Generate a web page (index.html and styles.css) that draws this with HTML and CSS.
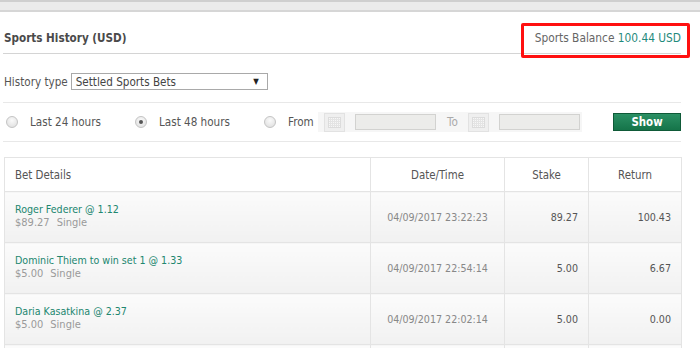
FILE: index.html
```html
<!DOCTYPE html>
<html>
<head>
<meta charset="utf-8">
<link rel="stylesheet" href="styles.css">
</head>
<body>
<div class="topbar"></div>
<div class="page">
  <div class="head">
    <div class="title">Sports History (USD)</div>
    <div class="balance">Sports Balance <span class="amount">100.44 USD</span></div>
    <div class="highlight"></div>
  </div>
  <div class="history">
    <span class="label">History type</span>
    <div class="select"><span>Settled Sports Bets</span><span class="arrow">▼</span></div>
  </div>
  <div class="filters">
    <span class="radio"></span><span class="rlabel">Last 24 hours</span>
    <span class="radio checked"></span><span class="rlabel">Last 48 hours</span>
    <span class="radio"></span><span class="rlabel from">From</span>
    <div class="range">
      <svg class="cal" width="21" height="19" viewBox="0 0 21 19">
        <rect x="0.5" y="0.5" width="20" height="18" fill="#efefef" stroke="#e2e2e2"/>
        <rect x="4.5" y="4.5" width="12" height="10" fill="#f7f7f7" stroke="#dcdcdc"/>
        <path d="M6.5 5v9M8.5 5v9M10.5 5v9M12.5 5v9M14.5 5v9M5 6.5h11M5 8.5h11M5 10.5h11M5 12.5h11" stroke="#e4e4e4" stroke-width="1"/>
      </svg>
      <div class="input"></div>
      <span class="to">To</span>
      <svg class="cal" width="21" height="19" viewBox="0 0 21 19">
        <rect x="0.5" y="0.5" width="20" height="18" fill="#efefef" stroke="#e2e2e2"/>
        <rect x="4.5" y="4.5" width="12" height="10" fill="#f7f7f7" stroke="#dcdcdc"/>
        <path d="M6.5 5v9M8.5 5v9M10.5 5v9M12.5 5v9M14.5 5v9M5 6.5h11M5 8.5h11M5 10.5h11M5 12.5h11" stroke="#e4e4e4" stroke-width="1"/>
      </svg>
      <div class="input"></div>
    </div>
    <div class="show">Show</div>
  </div>
  <table class="bets">
    <colgroup>
      <col class="c1"><col class="c2"><col class="c3"><col class="c4">
    </colgroup>
    <thead>
      <tr><th class="left">Bet Details</th><th>Date/Time</th><th>Stake</th><th>Return</th></tr>
    </thead>
    <tbody>
      <tr>
        <td class="left"><div class="sel">Roger Federer @ 1.12</div><div class="sub">$89.27<span class="type">Single</span></div></td>
        <td class="date">04/09/2017 23:22:23</td><td class="num">89.27</td><td class="num">100.43</td>
      </tr>
      <tr>
        <td class="left"><div class="sel">Dominic Thiem to win set 1 @ 1.33</div><div class="sub">$5.00<span class="type">Single</span></div></td>
        <td class="date">04/09/2017 22:54:14</td><td class="num">5.00</td><td class="num">6.67</td>
      </tr>
      <tr>
        <td class="left"><div class="sel">Daria Kasatkina @ 2.37</div><div class="sub">$5.00<span class="type">Single</span></div></td>
        <td class="date">04/09/2017 22:02:14</td><td class="num">5.00</td><td class="num">0.00</td>
      </tr>
      <tr>
        <td class="left"></td><td></td><td></td><td></td>
      </tr>
    </tbody>
  </table>
</div>
</body>
</html>
```
FILE: styles.css
```css
html, body { margin: 0; padding: 0; background: #fff; }
body {
  font-family: "DejaVu Sans Condensed", "DejaVu Sans", sans-serif;
  font-size: 10.6px;
  color: #555;
  overflow: hidden;
  height: 348px;
}
.topbar {
  height: 8px;
  background: #ebebeb;
  border-top: 2px solid #cfcfcf;
  border-bottom: 2px solid #d6d6d6;
}
.page { padding-left: 3px; width: 678px; }
.head {
  position: relative;
  height: 42px;
  box-sizing: border-box;
  padding: 11px 0 0 1px;
  display: flex;
  align-items: center;
  justify-content: space-between;
  border-bottom: 1px solid #d4d4d4;
}
.title { font-weight: bold; font-size: 11.6px; color: #4a4a4a; }
.balance { font-size: 11.8px; color: #666; }
.amount { color: #1f8a7c; }
.highlight {
  position: absolute;
  left: 518px; top: 11px;
  width: 163px; height: 29px;
  border: 3px solid #ff1010;
  border-radius: 2px;
}
.history {
  height: 49px;
  box-sizing: border-box;
  padding: 7px 0 0 1px;
  display: flex;
  align-items: center;
  border-bottom: 1px solid #e8e8e8;
}
.label { font-size: 11.6px; color: #555; margin-right: 3px; }
.select {
  width: 187px; height: 15px;
  border: 1px solid #a9a9a9;
  padding: 0 4px;
  display: flex; align-items: center; justify-content: space-between;
  font-size: 11.6px; color: #444;
}
.arrow { font-size: 8px; color: #222; margin-right: 4px; }
.filters {
  height: 39px;
  box-sizing: border-box;
  display: flex;
  align-items: center;
  border-bottom: 1px solid #e8e8e8;
}
.radio {
  flex: none;
  width: 10px; height: 10px;
  border: 1px solid #c4c4c4;
  border-radius: 50%;
  background: radial-gradient(circle at 50% 35%, #fafafa, #dcdcdc);
  margin-left: 3px;
  position: relative;
}
.radio.checked::after {
  content: "";
  position: absolute;
  left: 3px; top: 3px;
  width: 4px; height: 4px;
  border-radius: 50%;
  background: #555;
}
.rlabel { flex: none; margin-left: 12px; font-size: 11.6px; color: #555; width: 102px; }
.rlabel.from { width: 30px; }
.range {
  flex: none;
  display: flex; align-items: center;
  background: #f6f6f6;
  height: 20px;
  padding-left: 6px;
  width: 258px;
}
.cal { display: block; flex: none; }
.input {
  flex: none;
  width: 79px; height: 14px;
  margin-left: 10px;
  background: #ececea;
  border: 1px solid #d2d2d0;
}
.to { margin-left: 11px; width: 21px; color: #aaa; font-size: 11.6px; }
.show {
  flex: none;
  margin-left: 31px;
  width: 68px; height: 18px;
  box-sizing: border-box;
  border: 1px solid #0f5a38;
  background: linear-gradient(#2b9064, #157449);
  color: #fff;
  font-weight: bold;
  font-size: 11.4px;
  display: flex; align-items: center; justify-content: center;
}
.bets {
  margin-top: 15px;
  margin-left: 1px;
  width: 678px;
  border-collapse: collapse;
  table-layout: fixed;
  border: 1px solid #e4e4e4;
}
.c1 { width: 366px; }
.c2 { width: 134px; }
.c3 { width: 84px; }
.c4 { width: 93px; }
.bets th {
  height: 33px;
  font-weight: normal;
  font-size: 11.4px;
  color: #555;
  background: #fff;
  border: 1px solid #e4e4e4;
  text-align: center;
  padding: 0;
}
.bets th.left { text-align: left; padding-left: 10px; }
.bets td {
  height: 50px;
  border: 1px solid #e4e4e4;
  background: linear-gradient(#fbfbfb, #f1f1f1);
  padding: 0;
  vertical-align: middle;
}
.bets td.left { padding-left: 10px; padding-bottom: 3px; height: 47px; }
.sel { color: #21866f; font-size: 10.6px; line-height: 14px; }
.sub { color: #9a9a9a; font-size: 11px; line-height: 14px; }
.type { margin-left: 7px; }
.date { text-align: center; color: #888; font-size: 10.6px; }
.num { text-align: right; padding-right: 10px !important; color: #555; font-size: 10.6px; }
```
